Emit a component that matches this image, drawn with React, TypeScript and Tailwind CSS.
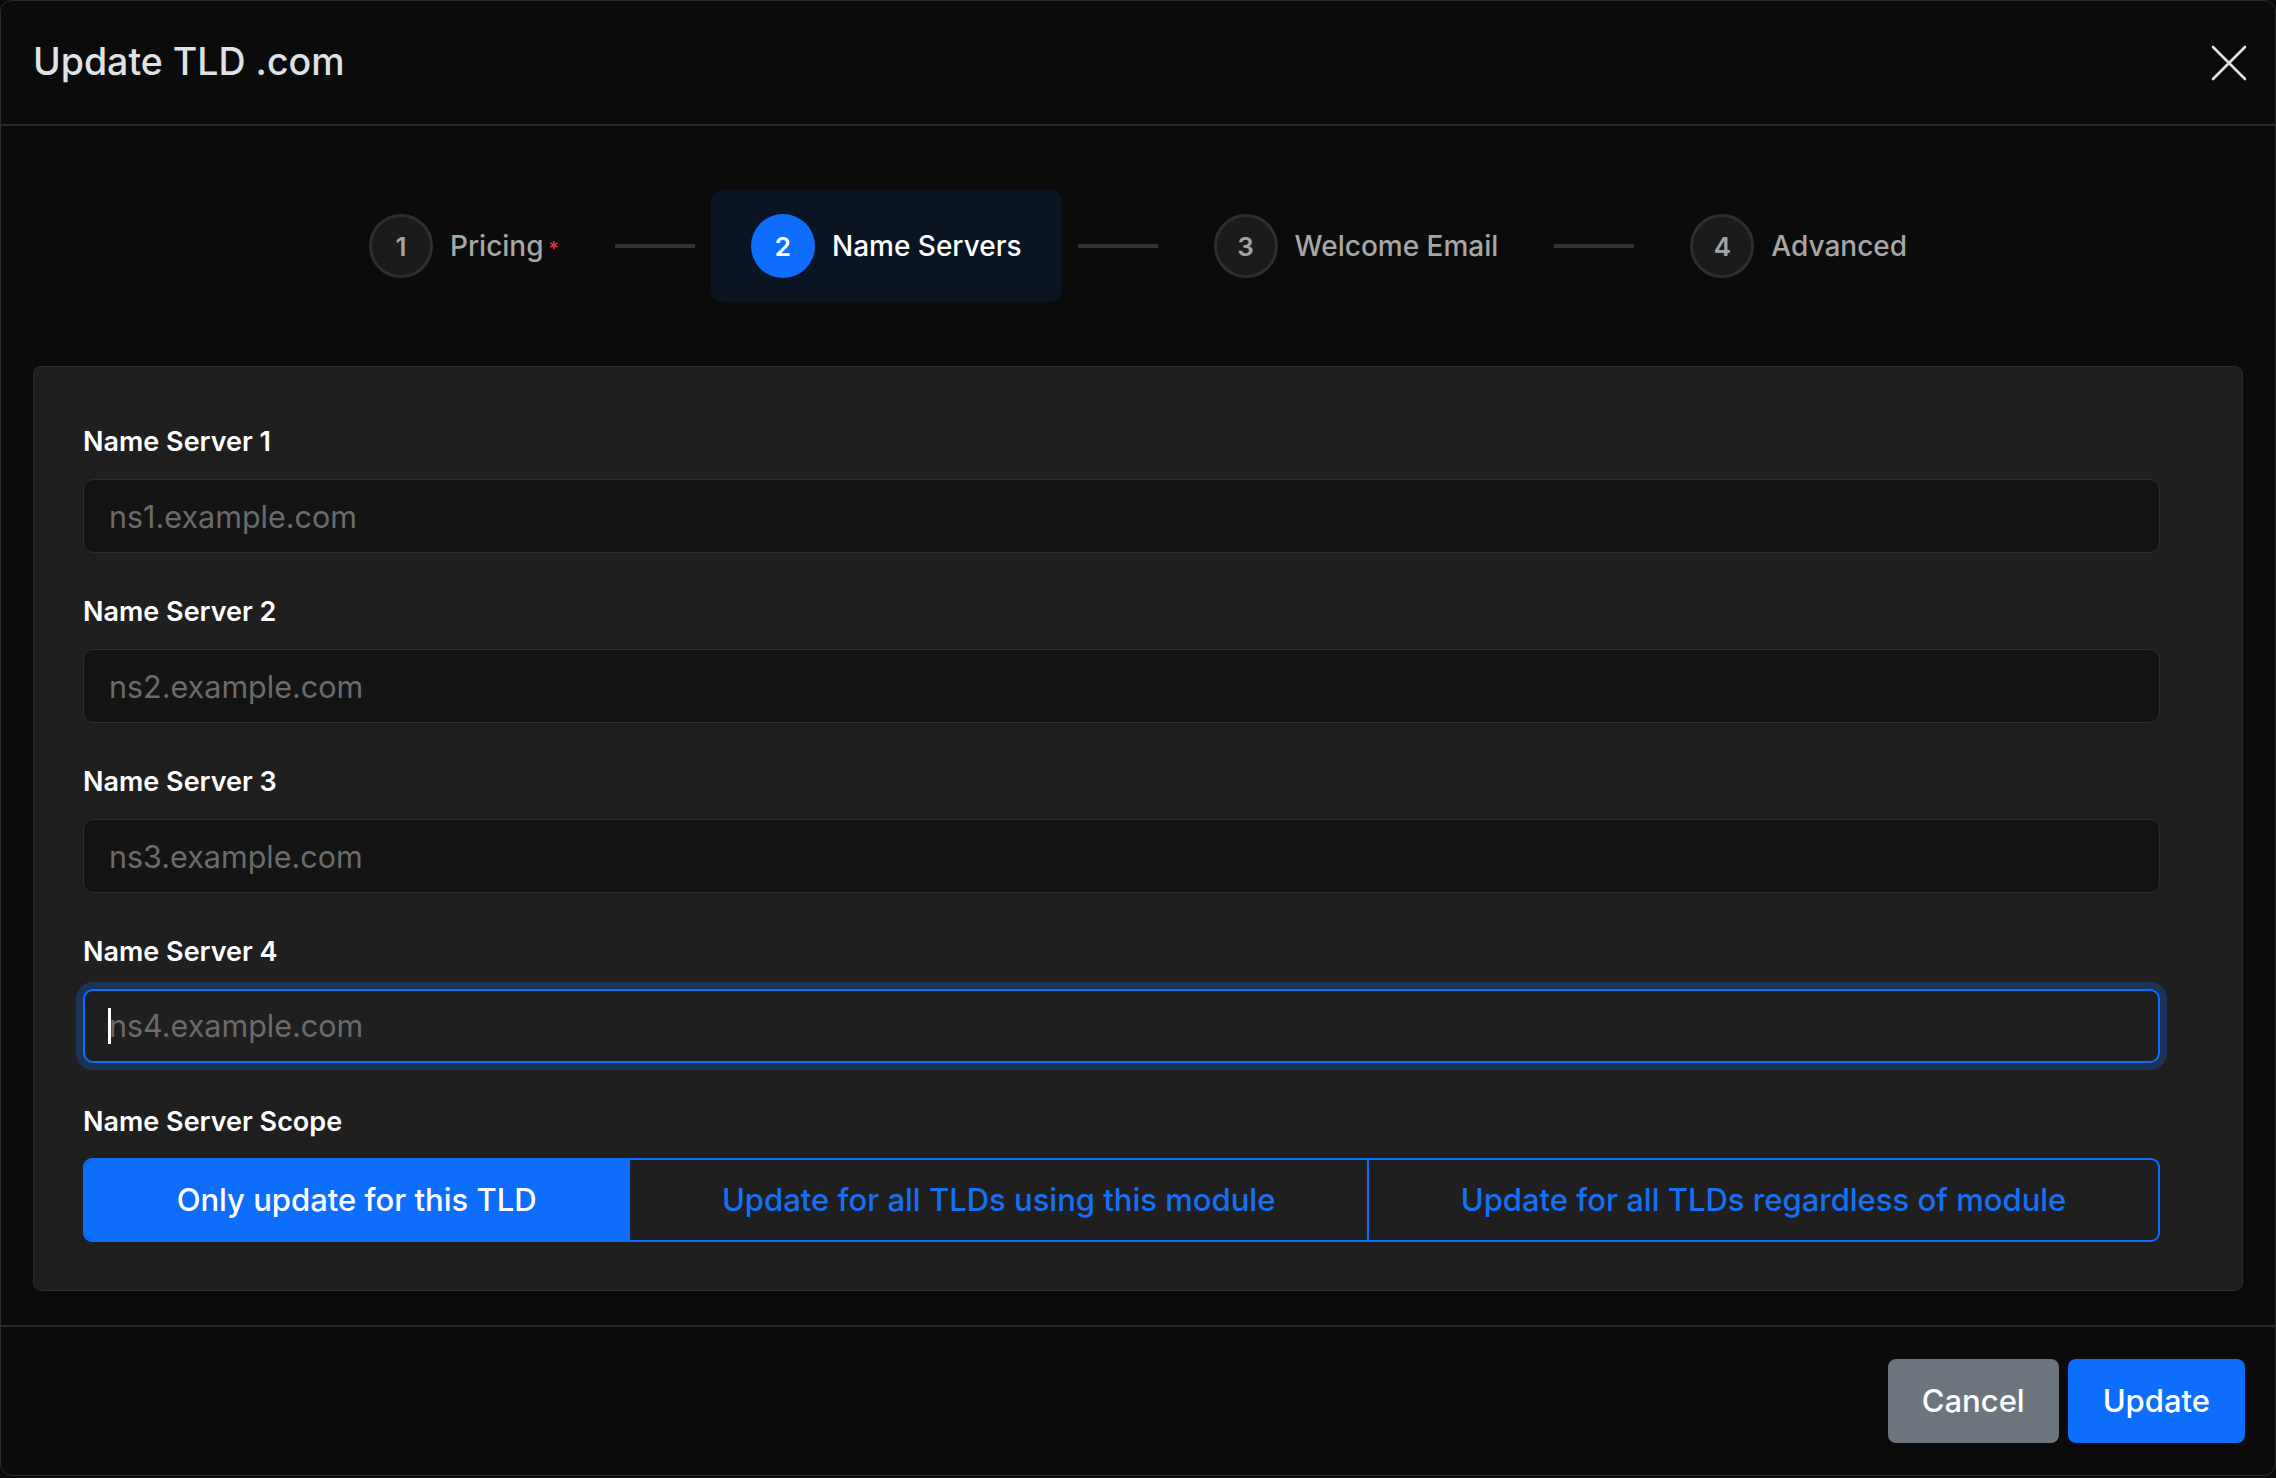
import React from "react";

const steps = [
  { n: 1, label: "Pricing", required: true },
  { n: 2, label: "Name Servers", active: true },
  { n: 3, label: "Welcome Email" },
  { n: 4, label: "Advanced" },
];

const scopes = [
  "Only update for this TLD",
  "Update for all TLDs using this module",
  "Update for all TLDs regardless of module",
];

function Step({ n, label, active, required }: { n: number; label: string; active?: boolean; required?: boolean }) {
  return (
    <div className={`flex items-center gap-[17px] px-[40px] h-[112px] rounded-[12px] ${active ? "bg-[#0b1423]" : ""}`}>
      <div
        className={`w-[64px] h-[64px] rounded-full flex items-center justify-center text-[26px] font-semibold ${
          active ? "bg-[#0d6efd] text-white" : "bg-[#1b1b1b] border-[3px] border-[#2e2e2e] text-[#a3a3a3]"
        }`}
      >
        {n}
      </div>
      <span className={`text-[28px] font-medium ${active ? "text-white" : "text-[#a6a6a6]"}`}>
        {label}
        {required && <span className="ml-[5px] text-[20px] text-[#dc3545]">*</span>}
      </span>
    </div>
  );
}

function Field({ label, placeholder, focused }: { label: string; placeholder: string; focused?: boolean }) {
  return (
    <div className="flex flex-col gap-[17px]">
      <label className="text-[27px] leading-[40px] font-semibold text-white">{label}</label>
      {focused ? (
        <div className="relative h-[74px] rounded-[10px] border-2 border-[#0d6efd] bg-[#1f1f1f] shadow-[0_0_0_7px_rgba(13,110,253,0.25)] flex items-center px-[24px]">
          <span className="text-[30.5px] text-[#6b6b6b]">{placeholder}</span>
          <span className="absolute left-[23px] top-[17px] w-[3px] h-[36px] bg-white" />
        </div>
      ) : (
        <input
          className="h-[74px] rounded-[10px] border border-[#2e2e2e] bg-[#141414] px-[25px] text-[30.5px] text-white placeholder:text-[#6b6b6b] outline-none"
          placeholder={placeholder}
        />
      )}
    </div>
  );
}

export default function App() {
  return (
    <div className="w-[2276px] h-[1478px] bg-[#0b0b0b] font-['Inter',sans-serif]">
      <div className="h-[1476px] flex flex-col rounded-[12px] border border-[#2b2b2b] bg-[#0b0b0b]">
        {/* Header */}
        <div className="h-[125px] shrink-0 flex items-center justify-between pl-[32px] pr-[28px] border-b-2 border-[#2a2a2a]">
          <h5 className="text-[37.5px] font-medium text-[#dee2e6]">Update TLD .com</h5>
          <svg width="36" height="36" viewBox="0 0 36 36" fill="none">
            <path d="M2 2L34 34M34 2L2 34" stroke="#e2e2e2" strokeWidth="2.6" strokeLinecap="round" />
          </svg>
        </div>

        {/* Body */}
        <div className="flex-1 px-[32px] pt-[64px]">
          <div className="flex items-center justify-center gap-[16px]">
            {steps.map((s, i) => (
              <React.Fragment key={s.n}>
                {i > 0 && <div className="w-[80px] h-[4px] bg-[#333333]" />}
                <Step {...s} />
              </React.Fragment>
            ))}
          </div>

          <div className="mt-[64px] rounded-[8px] border border-[#2c2c2c] bg-[#1f1f1f] pl-[49px] pr-[82px] pt-[55px] pb-[48px]">
            <div className="flex flex-col gap-[39px]">
              <Field label="Name Server 1" placeholder="ns1.example.com" />
              <Field label="Name Server 2" placeholder="ns2.example.com" />
              <Field label="Name Server 3" placeholder="ns3.example.com" />
              <Field label="Name Server 4" placeholder="ns4.example.com" focused />
              <div className="flex flex-col gap-[16px]">
                <label className="text-[27px] leading-[40px] font-semibold text-white">Name Server Scope</label>
                <div className="flex h-[84px] rounded-[9px] border-2 border-[#0d6efd] overflow-hidden">
                  {scopes.map((t, i) => (
                    <button
                      key={t}
                      className={`flex-auto text-[31px] font-medium ${
                        i === 0 ? "bg-[#0d6efd] text-white" : "text-[#1570f5] border-l-2 border-[#0d6efd]"
                      }`}
                    >
                      {t}
                    </button>
                  ))}
                </div>
              </div>
            </div>
          </div>
        </div>

        {/* Footer */}
        <div className="shrink-0 flex justify-end gap-[9px] border-t-2 border-[#2a2a2a] pt-[32px] pb-[32px] pr-[30px]">
          <button className="h-[84px] px-[34px] rounded-[8px] bg-[#6c757d] text-white text-[31px] font-medium">Cancel</button>
          <button className="h-[84px] px-[35px] rounded-[8px] bg-[#0d6efd] text-white text-[31px] font-medium">Update</button>
        </div>
      </div>
    </div>
  );
}
